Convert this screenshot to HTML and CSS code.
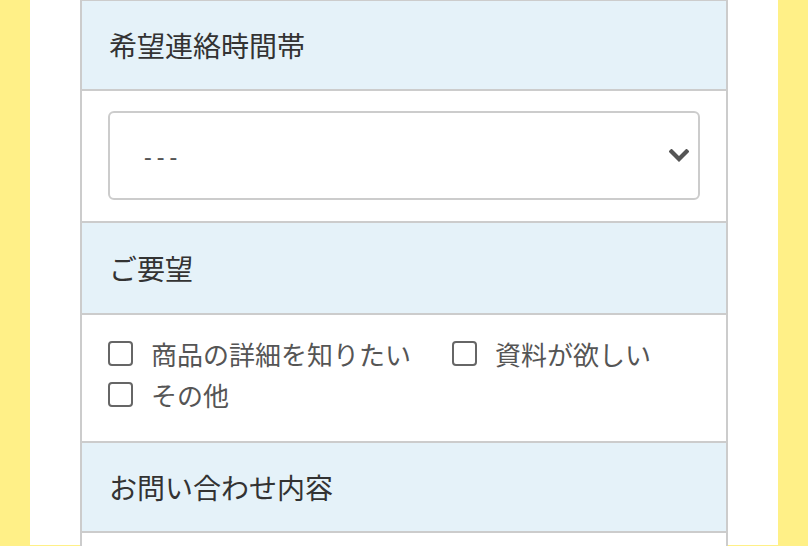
FILE: index.html
```html
<!DOCTYPE html>
<html lang="ja">
<head>
<meta charset="utf-8">
<link rel="stylesheet" href="styles.css">
</head>
<body>
<div class="page">
  <div class="form">
    <div class="head h1">希望連絡時間帯</div>
    <div class="cell sel-cell">
      <div class="select">
        <span class="sel-text">---</span>
        <svg class="chev" width="20" height="13" viewBox="0 0 20 13"><polyline points="2.5,2.5 10,10 17.5,2.5" fill="none" stroke="#555" stroke-width="4.2" stroke-linecap="square"/></svg>
      </div>
    </div>
    <div class="head h2">ご要望</div>
    <div class="cell chk-cell">
      <label class="chk"><span class="box"></span><span class="lbl">商品の詳細を知りたい</span></label>
      <label class="chk"><span class="box"></span><span class="lbl">資料が欲しい</span></label>
      <label class="chk"><span class="box"></span><span class="lbl">その他</span></label>
    </div>
    <div class="head h3">お問い合わせ内容</div>
    <div class="cell last"></div>
  </div>
</div>
</body>
</html>
```

FILE: styles.css
```css
html, body {
  margin: 0;
  padding: 0;
}
body {
  background: #fff087;
  font-family: "Noto Sans CJK JP", "Noto Sans", sans-serif;
  height: 546px;
  overflow: hidden;
}
.page {
  margin: 0 30px;
  background: #fff;
  padding: 0 50px;
  height: 546px;
}
.form {
  margin-top: -1px;
  border: 2px solid #cccccc;
  border-bottom: none;
}
.head {
  background: #e5f2f9;
  color: #333;
  font-size: 28px;
  display: flex;
  align-items: center;
  padding-left: 27px;
  border-bottom: 2px solid #cccccc;
}
.h1 { height: 88px; }
.h2 { height: 90px; }
.h3 { height: 88px; }
.cell {
  border-bottom: 2px solid #cccccc;
  background: #fff;
}
.sel-cell {
  padding: 20px 26px 21px 26px;
}
.select {
  height: 85px;
  border: 2px solid #cccccc;
  border-radius: 6px;
  display: flex;
  align-items: center;
  justify-content: space-between;
  padding: 0 9px 0 34px;
}
.sel-text {
  font-family: "Noto Sans", sans-serif;
  font-size: 24px;
  letter-spacing: 5px;
  color: #555;
}
.chev {
  display: block;
}
.chk-cell {
  padding: 18px 26px 26px 26px;
  display: flex;
  flex-wrap: wrap;
  column-gap: 41px;
  height: 82px;
  align-content: flex-start;
}
.chk {
  display: flex;
  align-items: center;
  height: 41px;
}
.box {
  width: 21px;
  height: 21px;
  border: 2px solid #666;
  border-radius: 4px;
  margin-right: 18px;
}
.lbl {
  font-size: 26px;
  color: #555;
  line-height: 41px;
}
.last {
  height: 40px;
  border-bottom: none;
}
```
